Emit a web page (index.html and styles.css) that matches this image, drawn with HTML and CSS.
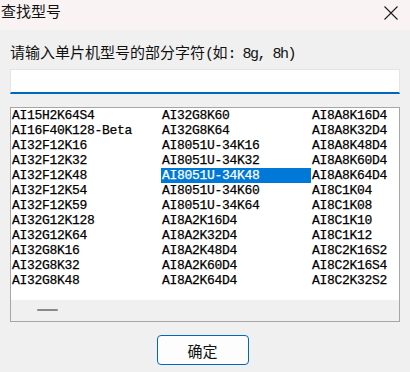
FILE: index.html
```html
<!DOCTYPE html>
<html lang="zh">
<head>
<meta charset="utf-8">
<title>查找型号</title>
<link rel="stylesheet" href="styles.css">
</head>
<body>
<div class="window">
  <div class="titlebar">
    <span class="title">查找型号</span>
    <svg class="close" width="14" height="14" viewBox="0 0 14 14"><path d="M0.5 0.5 L13.5 13.5 M13.5 0.5 L0.5 13.5" stroke="#1b1b1b" stroke-width="1.1" fill="none"/></svg>
  </div>
  <div class="content">
    <div class="label">请输入单片机型号的部分字符<span class="mono">(</span>如<span class="mono">: 8g, 8h)</span></div>
    <div class="input"></div>
    <div class="listbox">
      <div class="items">
        <div class="item">AI15H2K64S4</div>
        <div class="item">AI16F40K128-Beta</div>
        <div class="item">AI32F12K16</div>
        <div class="item">AI32F12K32</div>
        <div class="item">AI32F12K48</div>
        <div class="item">AI32F12K54</div>
        <div class="item">AI32F12K59</div>
        <div class="item">AI32G12K128</div>
        <div class="item">AI32G12K64</div>
        <div class="item">AI32G8K16</div>
        <div class="item">AI32G8K32</div>
        <div class="item">AI32G8K48</div>
        <div class="item">AI32G8K60</div>
        <div class="item">AI32G8K64</div>
        <div class="item">AI8051U-34K16</div>
        <div class="item">AI8051U-34K32</div>
        <div class="item selected">AI8051U-34K48</div>
        <div class="item">AI8051U-34K60</div>
        <div class="item">AI8051U-34K64</div>
        <div class="item">AI8A2K16D4</div>
        <div class="item">AI8A2K32D4</div>
        <div class="item">AI8A2K48D4</div>
        <div class="item">AI8A2K60D4</div>
        <div class="item">AI8A2K64D4</div>
        <div class="item">AI8A8K16D4</div>
        <div class="item">AI8A8K32D4</div>
        <div class="item">AI8A8K48D4</div>
        <div class="item">AI8A8K60D4</div>
        <div class="item">AI8A8K64D4</div>
        <div class="item">AI8C1K04</div>
        <div class="item">AI8C1K08</div>
        <div class="item">AI8C1K10</div>
        <div class="item">AI8C1K12</div>
        <div class="item">AI8C2K16S2</div>
        <div class="item">AI8C2K16S4</div>
        <div class="item">AI8C2K32S2</div>
      </div>
      <div class="hscroll"><div class="thumb"></div></div>
    </div>
    <div class="buttons">
      <button class="btn">确定</button>
    </div>
  </div>
</div>
</body>
</html>
```
FILE: styles.css
```css
html, body {
  margin: 0;
  padding: 0;
  background: #f0f0f0;
}
.window {
  width: 410px;
  height: 372px;
  background: #f0f0f0;
  font-family: "Noto Sans CJK SC", "Liberation Sans", sans-serif;
  color: #000;
  overflow: hidden;
}
.titlebar {
  height: 30px;
  background: #f9f4f3;
  display: flex;
  justify-content: space-between;
  align-items: flex-start;
  box-sizing: border-box;
}
.title {
  font-size: 15px;
  line-height: 22px;
  margin-left: 1px;
  color: #111;
}
.close {
  margin-top: 6px;
  margin-right: 12px;
}
.content {
  padding: 12px 10px 0 10px;
}
.label {
  font-size: 15px;
  line-height: 20px;
  height: 20px;
  white-space: nowrap;
  color: #111;
}
.mono {
  font-family: "Liberation Mono", monospace;
  letter-spacing: -1.5px;
}
.input {
  margin-top: 7px;
  height: 25px;
  box-sizing: border-box;
  background: #fff;
  border: 1px solid #e4e4e4;
  border-bottom: 2px solid #0067c0;
}
.listbox {
  margin-top: 13px;
  height: 215px;
  box-sizing: border-box;
  border: 1px solid #a6a6a6;
  background: #fff;
  overflow: hidden;
  display: flex;
  flex-direction: column;
}
.items {
  height: 192px;
  display: grid;
  grid-template-rows: repeat(12, 15px);
  grid-auto-flow: column;
  grid-auto-columns: 150px;
  align-content: start;
}
.item {
  font-family: "Liberation Mono", monospace;
  font-size: 13px;
  letter-spacing: -0.3px;
  line-height: 15px;
  height: 15px;
  padding-left: 1px;
  white-space: nowrap;
  color: #000;
  -webkit-text-stroke: 0.25px #000;
}
.item.selected {
  background: #0078d7;
  color: #fff;
  -webkit-text-stroke: 0.25px #fff;
}
.hscroll {
  flex: 1;
  background: #f0f0f0;
  padding-top: 9px;
  padding-left: 26px;
  box-sizing: border-box;
}
.thumb {
  width: 21px;
  height: 2px;
  background: #8a8a8a;
  border-radius: 1px;
}
.buttons {
  margin-top: 13px;
  display: flex;
  justify-content: center;
  padding-right: 5px;
}
.btn {
  width: 92px;
  height: 30px;
  box-sizing: border-box;
  border: 1px solid #0067c0;
  border-radius: 4px;
  background: #fdfdfd;
  font-family: "Noto Sans CJK SC", sans-serif;
  font-size: 15px;
  color: #111;
  padding: 0;
}
```
